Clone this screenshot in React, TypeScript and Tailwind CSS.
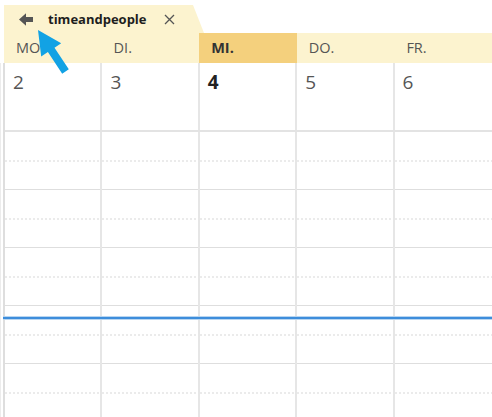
import React from 'react';

const days = [
  { label: 'MO.', num: 2 },
  { label: 'DI.', num: 3 },
  { label: 'MI.', num: 4, today: true },
  { label: 'DO.', num: 5 },
  { label: 'FR.', num: 6 },
];

const hours = [0, 1, 2, 3, 4];

const BackIcon = () => (
  <svg width="14" height="13" viewBox="0 0 14 13" className="shrink-0">
    <path d="M0 6.5L7 0.3V4H14V9H7V12.7Z" fill="#555" />
  </svg>
);

const CloseIcon = () => (
  <svg width="11" height="11" viewBox="0 0 11 11" className="shrink-0">
    <path d="M1 1L10 10M10 1L1 10" stroke="#555" strokeWidth="1.3" />
  </svg>
);

export default function App() {
  return (
    <div className="relative w-[492px] h-[417px] overflow-hidden bg-white font-['Open_Sans',sans-serif]">
      {/* tab */}
      <div className="pt-[5px] pl-[4px]">
        <div className="h-[28px] w-[200px] bg-[#fcf3cf] [clip-path:polygon(0_0,189px_0,100%_100%,0_100%)] flex items-center pl-[15px]">
          <BackIcon />
          <span className="ml-[15px] text-[13px] font-bold text-[#1e1e1e] leading-none">timeandpeople</span>
          <span className="ml-[17px]">
            <CloseIcon />
          </span>
        </div>
      </div>

      {/* weekday header */}
      <div className="ml-[4px] h-[30px] grid grid-cols-5 bg-[#fcf3cf]">
        {days.map(d => (
          <div
            key={d.label}
            className={
              d.today
                ? 'flex items-center pl-[12px] bg-[#f4d07d] text-[14.5px] font-bold text-[#333]'
                : 'flex items-center pl-[12px] text-[14.5px] text-[#555]'
            }
          >
            {d.label}
          </div>
        ))}
      </div>

      {/* body */}
      <div className="flex">
        <div className="w-[3px] border-l border-[#ececec]" />
        <div className="flex-1 border-l-2 border-[#dedede]">
          <div className="h-[67px] grid grid-cols-5">
            {days.map((d, i) => (
              <div
                key={d.label}
                className={
                  (i < 4 ? 'border-r-2 border-[#e6e6e6] ' : '') +
                  'pl-[8px] pt-[6px] text-[19px] leading-[26px] ' +
                  (d.today ? 'font-bold text-[#222]' : 'text-[#555]')
                }
              >
                {d.num}
              </div>
            ))}
          </div>

          <div className="grid grid-cols-5 border-t-2 border-[#e3e3e3]">
            {days.map((d, i) => (
              <div key={d.label} className={i < 4 ? 'border-r-2 border-[#e6e6e6]' : ''}>
                {hours.map(h => (
                  <div key={h} className="h-[58px] border-b border-[#dedede] pt-[28px]">
                    <div className="h-[2px] bg-[repeating-linear-gradient(to_right,#ebebeb_0_2px,transparent_2px_4px)]" />
                  </div>
                ))}
              </div>
            ))}
          </div>
        </div>
      </div>

      {/* current time indicator */}
      <div className="absolute left-[3px] right-0 top-[316px] h-[4px] border-y border-[#b9d6f1] bg-[#3d8ddb]" />

      {/* annotation arrow */}
      <svg className="absolute left-0 top-0" width="80" height="80" viewBox="0 0 80 80">
        <polygon
          points="38,30 61.2,43.3 54.5,47.7 68.8,69.3 62.2,73.7 47.9,52.1 41.2,56.5"
          fill="#12a2e4"
        />
      </svg>
    </div>
  );
}
